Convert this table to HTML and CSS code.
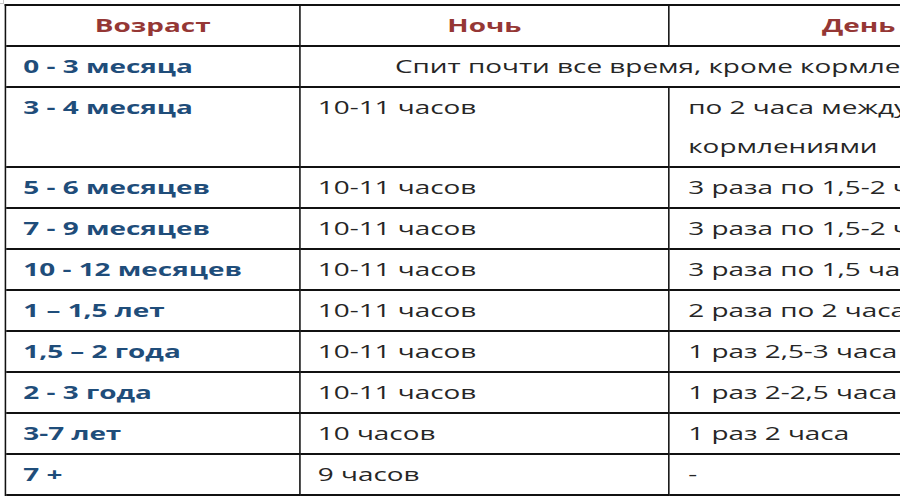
FILE: index.html
```html
<!DOCTYPE html>
<html lang="ru">
<head>
<meta charset="utf-8">
<title>Сон ребенка</title>
<link rel="stylesheet" href="styles.css">
</head>
<body>
<div class="corner"></div>
<div class="stretch">
  <table class="sleep">
    <colgroup>
      <col class="c-age">
      <col class="c-night">
      <col class="c-day">
    </colgroup>
    <thead>
      <tr>
        <th>Возраст</th>
        <th>Ночь</th>
        <th>День</th>
      </tr>
    </thead>
    <tbody>
      <tr>
        <td class="age">0 - 3 месяца</td>
        <td class="merged" colspan="2">Спит почти все время, кроме кормлений</td>
      </tr>
      <tr class="tall">
        <td class="age">3 - 4 месяца</td>
        <td>10-11 часов</td>
        <td class="day">по 2 часа между<br>кормлениями</td>
      </tr>
      <tr>
        <td class="age">5 - 6 месяцев</td>
        <td>10-11 часов</td>
        <td class="day">3 раза по 1,5-2 часа</td>
      </tr>
      <tr>
        <td class="age">7 - 9 месяцев</td>
        <td>10-11 часов</td>
        <td class="day">3 раза по 1,5-2 часа</td>
      </tr>
      <tr>
        <td class="age">10 - 12 месяцев</td>
        <td>10-11 часов</td>
        <td class="day">3 раза по 1,5 часа</td>
      </tr>
      <tr>
        <td class="age">1 – 1,5 лет</td>
        <td>10-11 часов</td>
        <td class="day">2 раза по 2 часа</td>
      </tr>
      <tr>
        <td class="age">1,5 – 2 года</td>
        <td>10-11 часов</td>
        <td class="day">1 раз 2,5-3 часа</td>
      </tr>
      <tr>
        <td class="age">2 - 3 года</td>
        <td>10-11 часов</td>
        <td class="day">1 раз 2-2,5 часа</td>
      </tr>
      <tr>
        <td class="age">3-7 лет</td>
        <td>10 часов</td>
        <td class="day">1 раз 2 часа</td>
      </tr>
      <tr>
        <td class="age">7 +</td>
        <td>9 часов</td>
        <td class="day">-</td>
      </tr>
    </tbody>
  </table>
</div>
</body>
</html>
```

FILE: styles.css
```css
html, body {
  margin: 0;
  padding: 0;
  background: #ffffff;
  overflow: hidden;
}

body {
  width: 900px;
  height: 500px;
  font-family: "Open Sans", "Noto Sans", "DejaVu Sans", sans-serif;
  color: #262626;
}

.corner {
  position: absolute;
  left: 0;
  top: 0;
  width: 3px;
  height: 3px;
  border-right: 1px solid #c8c8c8;
  border-bottom: 1px solid #c8c8c8;
}

.stretch {
  padding: 4px 0 0 3px;
  transform: scaleX(1.55);
  transform-origin: 0 0;
  width: 680px;
}

.sleep {
  border-collapse: separate;
  border-spacing: 0;
  table-layout: fixed;
  width: 673px;
  border-top: 2px solid #111;
  border-left: 1.3px solid #111;
  font-size: 18px;
}

.c-age { width: 190px; }
.c-night { width: 238px; }
.c-day { width: 245px; }

.sleep th,
.sleep td {
  padding: 0 0 0 11px;
  height: 39px;
  line-height: 39px;
  vertical-align: top;
  white-space: nowrap;
  border-bottom: 2px solid #111;
  border-right: 1.3px solid #111;
  overflow: hidden;
}

.sleep th {
  padding: 0;
  text-align: center;
  font-weight: 700;
  color: #953735;
}

.sleep td.age {
  font-weight: 700;
  color: #1f4d7a;
}

.sleep td.day {
  padding-left: 12px;
}

.sleep td.merged {
  padding: 0;
  text-align: center;
}

.sleep tr.tall td {
  height: 78px;
}
```
